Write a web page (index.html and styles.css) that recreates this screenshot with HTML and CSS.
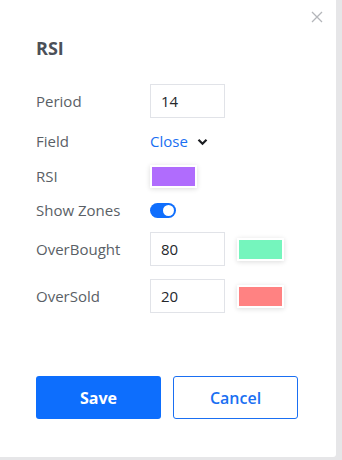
FILE: index.html
```html
<!DOCTYPE html>
<html lang="en">
  <head>
    <meta charset="UTF-8" />
    <meta name="viewport" content="width=device-width, initial-scale=1.0" />
    <title>RSI</title>
    <link rel="stylesheet" href="styles.css">
  </head>
  <body>
    <div class="modal">
      <button class="close-btn" aria-label="Close">
        <svg width="12" height="12" viewBox="0 0 12 12">
          <path d="M1 1L11 11M11 1L1 11" stroke="#b4b6ba" stroke-width="1.3" fill="none" />
        </svg>
      </button>

      <h2 class="title">RSI</h2>

      <div class="form">
        <div class="row row-input">
          <label>Period</label>
          <input type="text" value="14" />
        </div>
        <div class="row row-field">
          <label>Field</label>
          <div class="select">
            <span>Close</span>
            <svg width="11" height="8" viewBox="0 0 11 8">
              <path d="M1.5 1.8L5.5 5.8L9.5 1.8" stroke="#1b1d21" stroke-width="2.2" fill="none" />
            </svg>
          </div>
        </div>
        <div class="row row-color">
          <label>RSI</label>
          <div class="swatch purple"></div>
        </div>
        <div class="row row-toggle">
          <label>Show Zones</label>
          <div class="toggle"><div class="knob"></div></div>
        </div>
        <div class="row row-input">
          <label>OverBought</label>
          <input type="text" value="80" />
          <div class="swatch green"></div>
        </div>
        <div class="row row-input row-last">
          <label>OverSold</label>
          <input type="text" value="20" />
          <div class="swatch red"></div>
        </div>
      </div>

      <div class="actions">
        <button class="btn btn-save">Save</button>
        <button class="btn btn-cancel">Cancel</button>
      </div>
    </div>
  </body>
</html>
```

FILE: styles.css
```css
body {
  margin: 0;
  background-color: #e6e6e8;
  font-family: "Open Sans", "Noto Sans", Arial, sans-serif;
}
.modal {
  position: relative;
  width: 336px;
  height: 457px;
  background-color: #ffffff;
  border-radius: 0 0 3px 0;
  box-sizing: border-box;
  padding: 0 0 0 36px;
}
.close-btn {
  position: absolute;
  top: 11px;
  right: 13px;
  background: none;
  border: none;
  padding: 0;
  width: 12px;
  height: 12px;
  display: flex;
  cursor: pointer;
}
.title {
  margin: 0;
  padding-top: 36px;
  font-size: 18px;
  line-height: 24px;
  font-weight: 700;
  color: #4b5058;
}
.form {
  display: flex;
  flex-direction: column;
  margin-top: 24px;
}
.row {
  display: flex;
  align-items: center;
}
.row label {
  width: 114px;
  font-size: 15px;
  color: #5a5f66;
}
.row-input {
  height: 34px;
}
.row-field {
  height: 46px;
}
.row-color {
  height: 24px;
}
.row-toggle {
  height: 44px;
}
.row-last {
  margin-top: 13px;
}
input {
  width: 75px;
  height: 34px;
  box-sizing: border-box;
  border: 1px solid #e1e3e8;
  padding: 0 10px;
  font-family: inherit;
  font-size: 15px;
  color: #25272b;
  outline: none;
}
.select {
  display: flex;
  align-items: center;
  gap: 9px;
  font-size: 15px;
  color: #1a6ff2;
}
.select svg {
  margin-top: 2px;
}
.swatch {
  width: 47px;
  height: 23px;
  box-sizing: border-box;
  border: 2px solid #ffffff;
  box-shadow: 0 1px 5px rgba(0, 0, 0, 0.14);
}
.row-input .swatch {
  margin-left: 12px;
}
.purple {
  background-color: #b06cfd;
}
.green {
  background-color: #75f5bd;
}
.red {
  background-color: #ff8282;
}
.toggle {
  width: 26px;
  height: 15px;
  border-radius: 8px;
  background-color: #0f6efd;
  position: relative;
}
.knob {
  position: absolute;
  top: 2px;
  right: 2px;
  width: 11px;
  height: 11px;
  border-radius: 50%;
  background-color: #ffffff;
}
.actions {
  display: flex;
  gap: 12px;
  margin-top: 63px;
}
.btn {
  width: 125px;
  height: 43px;
  border-radius: 3px;
  font-family: inherit;
  font-size: 16px;
  cursor: pointer;
}
.btn-save {
  background-color: #0d6efd;
  border: none;
  color: #ffffff;
  font-weight: 700;
}
.btn-cancel {
  background-color: #ffffff;
  border: 1px solid #1a6ff2;
  color: #1a6ff2;
  font-weight: 600;
}
```
